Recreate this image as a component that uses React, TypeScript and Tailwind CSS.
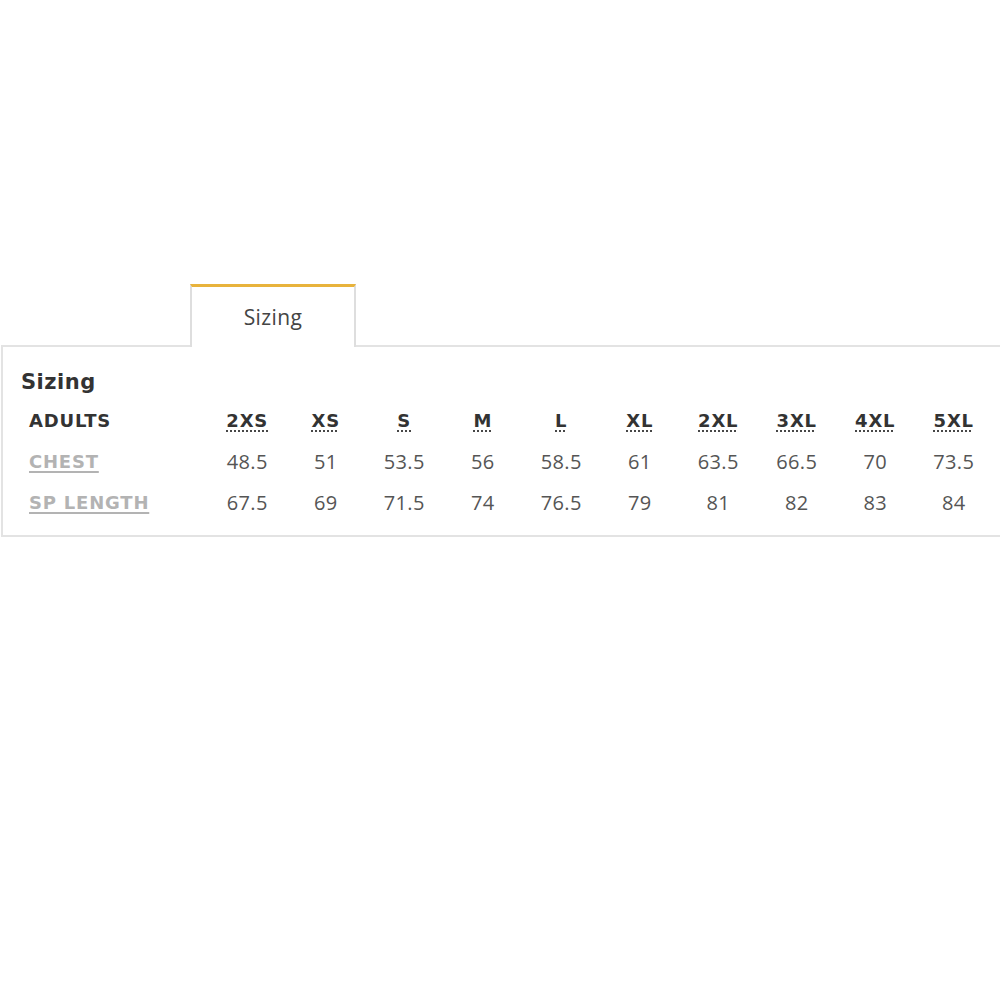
import React from "react";

const sizes = ["2XS", "XS", "S", "M", "L", "XL", "2XL", "3XL", "4XL", "5XL"];
const chest = ["48.5", "51", "53.5", "56", "58.5", "61", "63.5", "66.5", "70", "73.5"];
const length = ["67.5", "69", "71.5", "74", "76.5", "79", "81", "82", "83", "84"];

const bold = { fontFamily: '"DejaVu Sans", sans-serif' };

export default function App() {
  return (
    <div className="w-[1000px] h-[1000px] bg-white overflow-hidden pt-[284px]" style={{ fontFamily: '"Open Sans", sans-serif' }}>
      <div className="ml-[190px] w-[166px] h-[63px] border-x-2 border-t-[3px] border-x-[#dedede] border-t-[#e8b33c] bg-white relative z-10 -mb-[2px] flex items-center justify-center">
        <span className="text-[21px] tracking-[0.4px] text-[#444] mt-[1px]">Sizing</span>
      </div>
      <div className="ml-[1px] w-[1010px] h-[192px] border-2 border-[#e3e3e3] pl-[18px] pt-[20px]">
        <div className="text-[21px] font-bold tracking-[0.5px] text-[#333] leading-[30px]" style={bold}>Sizing</div>
        <div className="mt-[3px] flex flex-col">
          {[
            { label: "ADULTS", vals: sizes, head: true },
            { label: "CHEST", vals: chest, head: false },
            { label: "SP LENGTH", vals: length, head: false },
          ].map((row) => (
            <div key={row.label} className="flex items-center h-[41px]">
              <div
                className={
                  "w-[187px] pl-[8px] text-[18px] tracking-[0.8px] font-bold " +
                  (row.head ? "text-[#333]" : "text-[#b3b3b3] underline decoration-2 underline-offset-[3px]")
                }
                style={bold}
              >
                {row.label}
              </div>
              {row.vals.map((v, i) => (
                <div key={i} className="w-[78.5px] flex justify-center">
                  {row.head ? (
                    <span
                      className="text-[18px] tracking-[0.8px] font-bold text-[#333] underline decoration-dotted decoration-[#333] underline-offset-[4px]"
                      style={bold}
                    >
                      {v}
                    </span>
                  ) : (
                    <span className="text-[20px] tracking-[0.3px] text-[#555]">{v}</span>
                  )}
                </div>
              ))}
            </div>
          ))}
        </div>
      </div>
    </div>
  );
}
